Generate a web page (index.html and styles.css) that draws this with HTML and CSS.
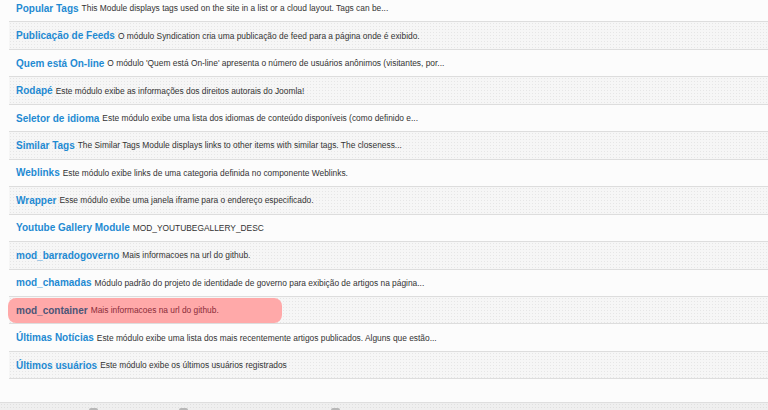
FILE: index.html
```html
<!DOCTYPE html>
<html>
<head>
<meta charset="utf-8">
<link rel="stylesheet" href="styles.css">
</head>
<body>
<div class="page">
  <ul class="modules">
    <li class="row"><a class="title">Popular Tags</a><span class="desc">This Module displays tags used on the site in a list or a cloud layout. Tags can be...</span></li>
    <li class="row alt"><a class="title">Publicação de Feeds</a><span class="desc">O módulo Syndication cria uma publicação de feed para a página onde é exibido.</span></li>
    <li class="row"><a class="title">Quem está On-line</a><span class="desc">O módulo 'Quem está On-line' apresenta o número de usuários anônimos (visitantes, por...</span></li>
    <li class="row alt"><a class="title">Rodapé</a><span class="desc">Este módulo exibe as informações dos direitos autorais do Joomla!</span></li>
    <li class="row"><a class="title">Seletor de idioma</a><span class="desc">Este módulo exibe uma lista dos idiomas de conteúdo disponíveis (como definido e...</span></li>
    <li class="row alt"><a class="title">Similar Tags</a><span class="desc">The Similar Tags Module displays links to other items with similar tags. The closeness...</span></li>
    <li class="row"><a class="title">Weblinks</a><span class="desc">Este módulo exibe links de uma categoria definida no componente Weblinks.</span></li>
    <li class="row alt"><a class="title">Wrapper</a><span class="desc">Esse módulo exibe uma janela iframe para o endereço especificado.</span></li>
    <li class="row"><a class="title">Youtube Gallery Module</a><span class="desc">MOD_YOUTUBEGALLERY_DESC</span></li>
    <li class="row alt"><a class="title">mod_barradogoverno</a><span class="desc">Mais informacoes na url do github.</span></li>
    <li class="row"><a class="title">mod_chamadas</a><span class="desc">Módulo padrão do projeto de identidade de governo para exibição de artigos na página...</span></li>
    <li class="row alt"><div class="hilite"><a class="title">mod_container</a><span class="desc">Mais informacoes na url do github.</span></div></li>
    <li class="row"><a class="title">Últimas Notícias</a><span class="desc">Este módulo exibe uma lista dos mais recentemente artigos publicados. Alguns que estão...</span></li>
    <li class="row alt"><a class="title">Últimos usuários</a><span class="desc">Este módulo exibe os últimos usuários registrados</span></li>
  </ul>
  <div class="footer">
    <span class="tab t1"></span>
    <span class="tab t2"></span>
    <span class="tab t3"></span>
  </div>
</div>
</body>
</html>
```
FILE: styles.css
```css
html, body {
  margin: 0;
  padding: 0;
  background: #fcfcfc;
  overflow: hidden;
}
.page {
  width: 768px;
  height: 410px;
  display: flex;
  flex-direction: column;
  font-family: "Liberation Sans", Arial, sans-serif;
}
.modules {
  list-style: none;
  margin: -5px 0 0 0;
  padding: 0 0 0 9px;
}
.row {
  position: relative;
  height: 27.46px;
  box-sizing: border-box;
  border-bottom: 1px solid #dddddd;
  display: flex;
  align-items: center;
  padding-left: 7px;
  white-space: nowrap;
  background: #fcfcfc;
}
.row.alt {
  background-color: #f6f6f6;
  background-image: radial-gradient(circle, #e6e6e6 0.8px, transparent 1px);
  background-size: 3px 3px;
}
.title {
  font-size: 10px;
  font-weight: bold;
  color: #1f8ad2;
  margin-right: 3px;
}
.desc {
  font-size: 8.4px;
  color: #333;
}
.hilite {
  position: absolute;
  left: -1px;
  top: 1px;
  width: 274px;
  height: 25px;
  box-sizing: border-box;
  background: #ffa9a9;
  border-radius: 8px;
  display: flex;
  align-items: center;
  padding-left: 8px;
}
.hilite .title {
  color: #4c5577;
}
.hilite .desc {
  color: #8a2c39;
}
.footer {
  margin-top: auto;
  height: 7px;
  border-top: 1px solid #dedede;
  background-color: #efefef;
  background-image: radial-gradient(circle, #e0e0e0 0.8px, transparent 1px);
  background-size: 3px 3px;
  position: relative;
}
.tab {
  position: absolute;
  bottom: 0;
  height: 2px;
  width: 9px;
  background: #b8b8b8;
  border-radius: 2px 2px 0 0;
}
.t1 { left: 89px; }
.t2 { left: 179px; }
.t3 { left: 331px; }
```
